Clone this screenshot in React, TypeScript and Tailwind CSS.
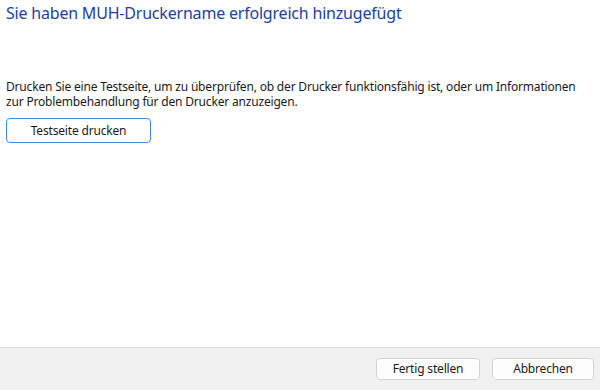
import React from "react";

export default function App() {
  const font = { fontFamily: '"Noto Sans", "Open Sans", sans-serif' };
  return (
    <div className="w-[600px] h-[390px] bg-white flex flex-col text-[#1a1a1a]" style={font}>
      <div className="flex-1 flex flex-col px-[6px]">
        <div className="pt-[2px] text-[16px] leading-[22px] text-[#1d3f9c] tracking-[-0.2px]">
          Sie haben MUH-Druckername erfolgreich hinzugefügt
        </div>
        <div className="mt-[55px] flex flex-col text-[12px] tracking-[-0.18px]">
          <p className="leading-[15px] h-[15px] overflow-visible whitespace-nowrap">
            Drucken Sie eine Testseite, um zu überprüfen, ob der Drucker funktionsfähig ist, oder um Informationen
          </p>
          <p className="leading-[15px] h-[15px] whitespace-nowrap">
            zur Problembehandlung für den Drucker anzuzeigen.
          </p>
        </div>
        <div className="mt-[9px]">
          <button className="w-[145px] h-[25px] rounded-[4px] border border-[#3d8ad6] bg-white text-[12px] text-[#1a1a1a] flex items-center justify-center tracking-[-0.18px]">
            Testseite drucken
          </button>
        </div>
      </div>
      <div className="h-[43px] bg-[#f0f0f0] border-t border-[#e2e2e2] flex items-start justify-end pt-[10px] pr-[6px] gap-[12px]">
        <button className="w-[104px] h-[22px] rounded-[4px] border border-[#d3d3d3] bg-[#fdfdfd] text-[12px] text-[#1a1a1a] flex items-center justify-center tracking-[-0.18px]">
          Fertig stellen
        </button>
        <button className="w-[102px] h-[22px] rounded-[4px] border border-[#d3d3d3] bg-[#fdfdfd] text-[12px] text-[#1a1a1a] flex items-center justify-center tracking-[-0.18px]">
          Abbrechen
        </button>
      </div>
    </div>
  );
}
